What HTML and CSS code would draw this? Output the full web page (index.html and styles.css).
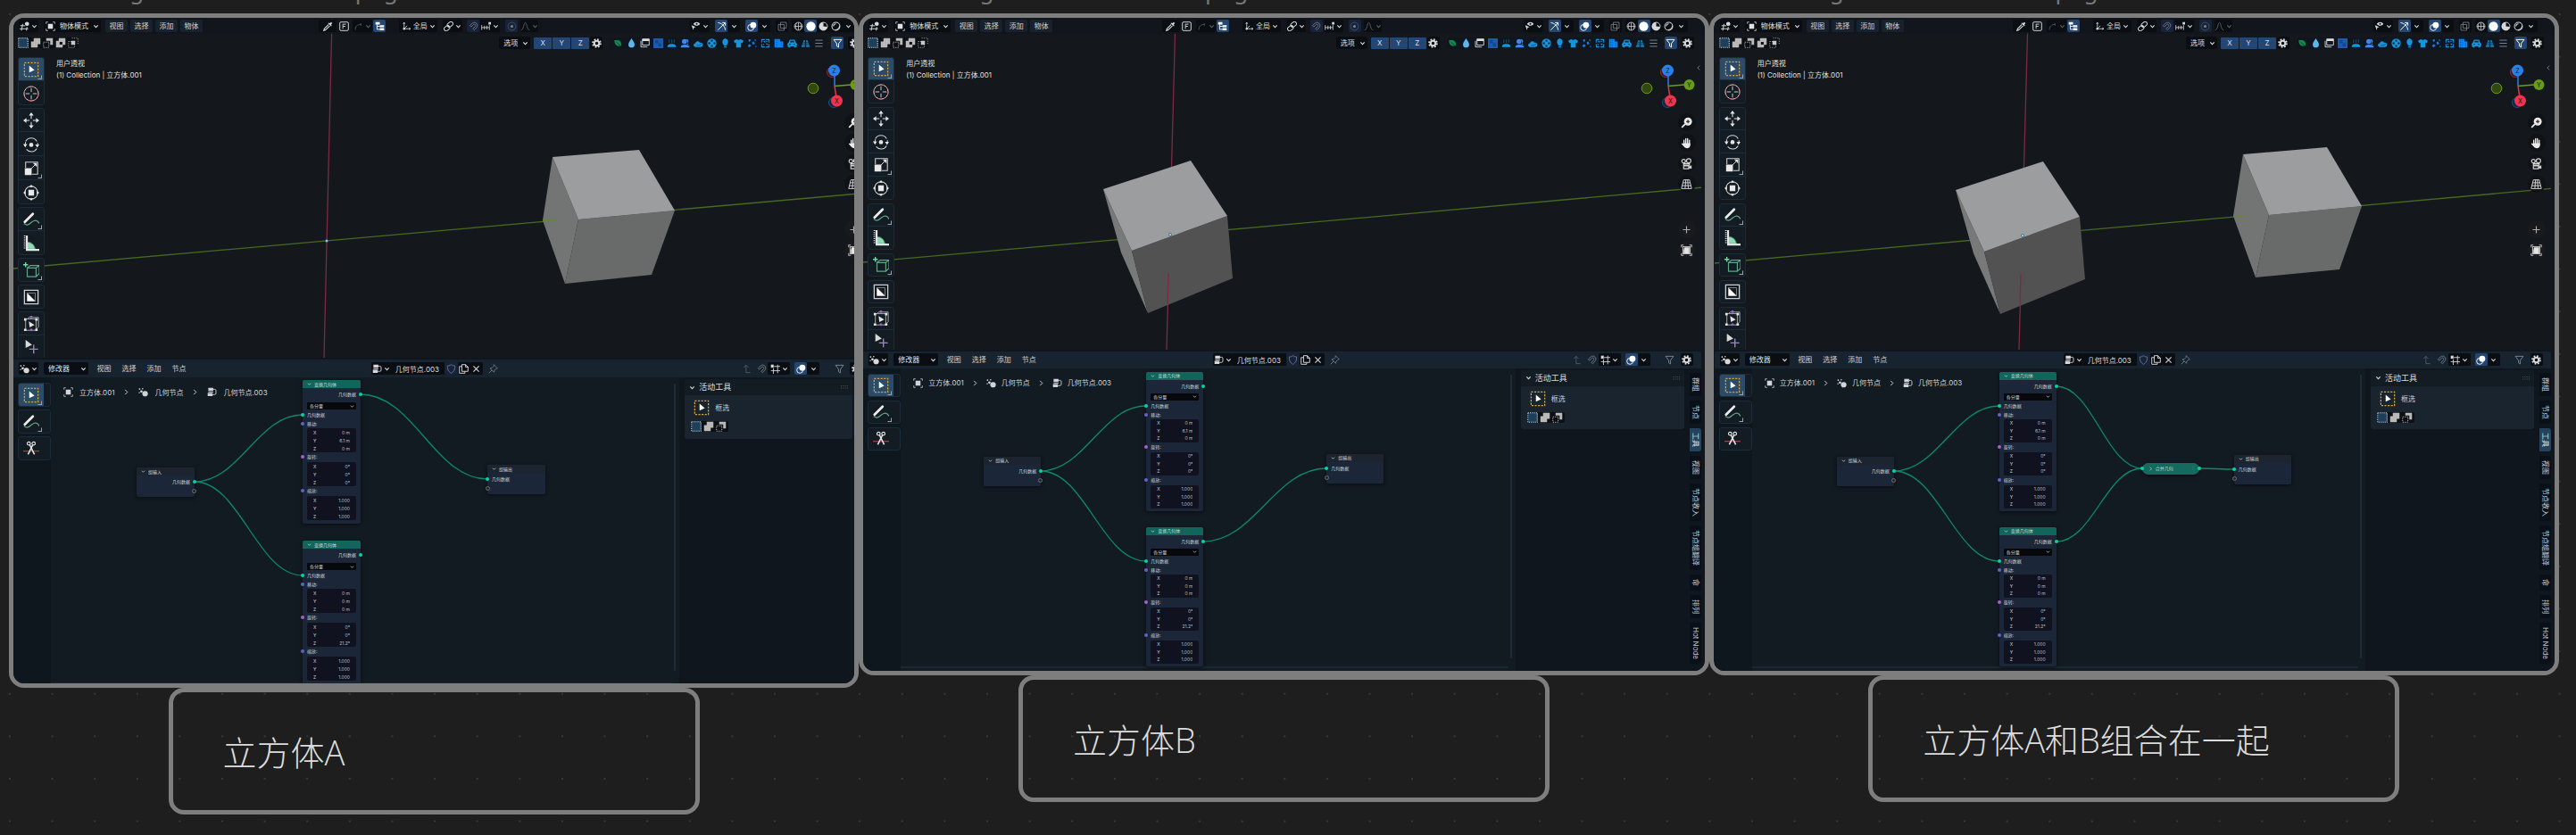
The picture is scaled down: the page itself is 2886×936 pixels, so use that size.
FILE: index.html
```html
<!DOCTYPE html>
<html lang="zh-CN">
<head>
<meta charset="utf-8">
<meta name="viewport" content="width=device-width, initial-scale=1">
<title>几何节点 立方体</title>
<link rel="stylesheet" href="styles.css">
</head>
<body>
<svg class="sprite" aria-hidden="true">
  <symbol id="chev" viewBox="0 0 8 8"><path d="M1.5 2.7 4 5.3 6.5 2.7" fill="none" stroke="currentColor" stroke-width="1.2"/></symbol>
  <symbol id="chevr" viewBox="0 0 8 8"><path d="M2.5 1 5.5 4 2.5 7" fill="none" stroke="currentColor" stroke-width="1.1"/></symbol>
  <symbol id="chevl" viewBox="0 0 8 8"><path d="M5.5 1 2.5 4 5.5 7" fill="none" stroke="currentColor" stroke-width="1.1"/></symbol>
  <symbol id="view3d" viewBox="0 0 16 16"><path d="M1 7h8M0 12h14M5 4 3 15M12 9l-1 6" fill="none" stroke="currentColor" stroke-width="1.4"/><circle cx="12" cy="4" r="3.4" fill="currentColor"/></symbol>
  <symbol id="object" viewBox="0 0 16 16"><path d="M4 4h8v8H4z" fill="currentColor"/><path d="M1 4V1h3M12 1h3v3M15 12v3h-3M4 15H1v-3" fill="none" stroke="currentColor" stroke-width="1.1"/></symbol>
  <symbol id="dropper" viewBox="0 0 16 16"><path d="m9 2 2 1 2-2 2 2-2 2 1 2-1 1-5-5z" fill="currentColor"/><path d="m9 5-7 7-1 3 3-1 7-7" fill="none" stroke="currentColor" stroke-width="1.6"/></symbol>
  <symbol id="fkey" viewBox="0 0 16 16"><rect x="1" y="1" width="14" height="14" rx="2" fill="none" stroke="currentColor" stroke-width="1.4"/><path d="M6 12V4.5h5M6 8h4" fill="none" stroke="currentColor" stroke-width="1.3"/></symbol>
  <symbol id="arc" viewBox="0 0 16 16"><path d="M3 14c0-6 3-9 9-9M12 3v4" fill="none" stroke="currentColor" stroke-width="1.2"/></symbol>
  <symbol id="tree" viewBox="0 0 16 16"><path d="M1 1h7v4H1zM8 6h7v3.500H8zM8 11h7v3.500H8z" fill="currentColor"/><path d="M3.500 5v8H8M3.500 8H8" fill="none" stroke="currentColor" stroke-width="1.3"/></symbol>
  <symbol id="axes" viewBox="0 0 16 16"><path d="M4 2v10h10M4 12l5-5M2.500 4 4 1.500 5.500 4M12 10.500l2.500 1.500-2.500 1.500" fill="none" stroke="currentColor" stroke-width="1.2"/><circle cx="4" cy="12" r="1.800" fill="currentColor"/></symbol>
  <symbol id="link" viewBox="0 0 16 16"><g fill="none" stroke="currentColor" stroke-width="1.4"><rect x="5.500" y="2" width="10" height="6.500" rx="3.200" transform="rotate(-40 10 5)"/><rect x="0.500" y="7.500" width="10" height="6.500" rx="3.200" transform="rotate(-40 6 11)"/></g><circle cx="8" cy="8" r="1.300" fill="currentColor"/></symbol>
  <symbol id="magnet" viewBox="0 0 16 16"><path d="m2 7 4-4c5-4 11 2 7 7l-4 4-2-2 4-4c1.500-2-1-4.500-3-3L4 9z" fill="none" stroke="currentColor" stroke-width="1.2"/></symbol>
  <symbol id="incr" viewBox="0 0 16 16"><path d="M1 6v8M1 10h12M5.500 7v6M9.500 7v6M13.500 6v8" fill="none" stroke="currentColor" stroke-width="1.2"/><path d="M12 1h4v4h-4z" fill="currentColor"/></symbol>
  <symbol id="prop" viewBox="0 0 16 16"><circle cx="8" cy="8" r="6.500" fill="none" stroke="currentColor" stroke-width="1" opacity=".6"/><circle cx="8" cy="8" r="2.200" fill="currentColor"/></symbol>
  <symbol id="bell" viewBox="0 0 16 16"><path d="M1 14c5 0 4-12 7-12s2 12 7 12" fill="none" stroke="currentColor" stroke-width="1.3"/></symbol>
  <symbol id="visib" viewBox="0 0 16 16"><path d="M4 4c3-4 8-4 11 0-3 4-8 4-11 0z" fill="currentColor"/><circle cx="9.500" cy="4" r="1.600" fill="#14181d"/><path d="m1 6 7 3-3 1-1 4z" fill="currentColor"/></symbol>
  <symbol id="gizmo" viewBox="0 0 16 16"><path d="M2 2c6 1 11 5 12 12M2 14 13 3M9 2h5v5" fill="none" stroke="currentColor" stroke-width="1.4"/></symbol>
  <symbol id="overlay" viewBox="0 0 16 16"><circle cx="10" cy="6" r="5" fill="currentColor"/><circle cx="6" cy="10" r="5" fill="none" stroke="currentColor" stroke-width="1.3"/></symbol>
  <symbol id="xray" viewBox="0 0 16 16"><path d="M5 1.500h9.500V11H5zM1.500 5H11v9.500H1.500z" fill="none" stroke="currentColor" stroke-width="1.2"/></symbol>
  <symbol id="wire" viewBox="0 0 16 16"><g fill="none" stroke="currentColor" stroke-width="1.1"><circle cx="8" cy="8" r="6.500"/><path d="M1.500 8h13M8 1.500v13M5 2.500c-2 4-2 7 0 11M11 2.500c2 4 2 7 0 11"/></g></symbol>
  <symbol id="solid" viewBox="0 0 16 16"><circle cx="8" cy="8" r="7.500" fill="#fff"/></symbol>
  <symbol id="matl" viewBox="0 0 16 16"><circle cx="8" cy="8" r="6.500" fill="none" stroke="currentColor" stroke-width="1.3"/><path d="M8 1.500A6.500 6.500 0 1 0 14 9l-6-1z" fill="currentColor"/><path d="M8 8h6.500A6.500 6.500 0 0 1 8 14.500" fill="currentColor" opacity=".3"/></symbol>
  <symbol id="rend" viewBox="0 0 16 16"><circle cx="8" cy="8" r="6.500" fill="none" stroke="currentColor" stroke-width="1.5"/><path d="M4 8a4 4 0 0 1 4-4M14 7a7 7 0 0 1-7 7" fill="none" stroke="currentColor" stroke-width="1.5"/></symbol>
  <symbol id="sel1" viewBox="0 0 16 16"><rect x="1" y="1" width="14" height="14" fill="#1c3f5c" stroke="#d4e4f0" stroke-width="1.400" stroke-dasharray="1.500 1.500"/></symbol>
  <symbol id="sel2" viewBox="0 0 16 16"><path d="M5 1h10v9h-4v5H1V6h4z" fill="#b9b9b9"/></symbol>
  <symbol id="sel3" viewBox="0 0 16 16"><path d="M5 1h10v10h-4V5H5z" fill="#b9b9b9"/><path d="M1 7h8v8H1z" fill="none" stroke="#b9b9b9" stroke-width="1.300" stroke-dasharray="1.600 1.600"/></symbol>
  <symbol id="sel4" viewBox="0 0 16 16"><path d="M5 1h10v10h-4v4H1V5h4zM6.500 6.500v4h4v-4z" fill="#b9b9b9" fill-rule="evenodd"/></symbol>
  <symbol id="sel5" viewBox="0 0 16 16"><path d="M1 6h9v9H1zM6 1h9v9" fill="none" stroke="#999" stroke-width="1.300" stroke-dasharray="1.600 1.600"/><path d="M5 5h6v6H5z" fill="#c9c9c9"/></symbol>
  <symbol id="gear" viewBox="0 0 16 16"><circle cx="8" cy="8" r="4" fill="none" stroke="currentColor" stroke-width="3"/><circle cx="8" cy="8" r="6.500" fill="none" stroke="currentColor" stroke-width="2.600" stroke-dasharray="2.600 2.500"/></symbol>
  <symbol id="funnel" viewBox="0 0 16 16"><path d="M1.500 2h13L9.500 8.500v6l-3-2v-4z" fill="none" stroke="currentColor" stroke-width="1.4"/></symbol>
  <symbol id="leaf" viewBox="0 0 16 16"><path d="M2 3c8-1 12 1 11 9-6 2-11 0-11-9z" fill="#118a4c"/><path d="m5 6 9 8" stroke="#0a2a1c" stroke-width="1"/></symbol>
  <symbol id="drop" viewBox="0 0 16 16"><path d="M8 0c3 5 5 7 5 10a5 5 0 0 1-10 0c0-3 2-5 5-10z" fill="#5cb8ec"/></symbol>
  <symbol id="stack" viewBox="0 0 16 16"><path d="M4 1h11v10H4z" fill="none" stroke="#ddd" stroke-width="1.300"/><path d="M4 1h11v3.500H4z" fill="#ddd"/><path d="M1.500 4v10H12" fill="none" stroke="#ddd" stroke-width="1.300"/></symbol>
  <symbol id="grid" viewBox="0 0 16 16"><path d="M0 0h16v16H0z" fill="#1d5bb0"/><path d="M3 3h10v10H3z" fill="#164684"/><path d="M8 3h5v5H8zM3 8h5v5H3z" fill="#1d5bb0"/></symbol>
  <symbol id="steam" viewBox="0 0 16 16"><path d="M1 14c0-4 3-5 7-5s7 1 7 5z" fill="#1595dc"/><path d="M4 7c-1-2 1-2 0-5M8 7c-1-2 1-2 0-5M12 7c-1-2 1-2 0-5" stroke="#1574ac" fill="none"/></symbol>
  <symbol id="person" viewBox="0 0 16 16"><circle cx="7" cy="5" r="4" fill="#3f88f0"/><path d="M1 15c0-4 2-5 6-5s8 1 8 5zM10 1c5 0 4 7 1 8l4 3v2z" fill="#3f88f0"/></symbol>
  <symbol id="cloud" viewBox="0 0 16 16"><path d="M3 14a3 3 0 0 1 0-6c1-4 6-4 7-1 3-1 6 1 5 3 0 2-1 4-4 4z" fill="#1595dc"/><path d="M5 11c4 1 6 0 9-3" stroke="#0e3a58" fill="none"/></symbol>
  <symbol id="ball" viewBox="0 0 16 16"><circle cx="8" cy="8" r="7.500" fill="#1595dc"/><g fill="#0f2a40"><circle cx="8" cy="3.800" r="1.700"/><circle cx="8" cy="12.200" r="1.700"/><circle cx="3.800" cy="8" r="1.700"/><circle cx="12.200" cy="8" r="1.700"/></g></symbol>
  <symbol id="bulb" viewBox="0 0 16 16"><path d="M8 0a6 6 0 0 1 3 10l-1 2H6l-1-2A6 6 0 0 1 8 0zM6 13h4v2H6z" fill="#1595dc"/></symbol>
  <symbol id="shirt" viewBox="0 0 16 16"><path d="M0 4l5-3c1 2 5 2 6 0l5 3-2 4-2-1v8H4V7L2 8z" fill="#1595dc"/></symbol>
  <symbol id="parts" viewBox="0 0 16 16"><path d="m2 2 3-1 1 3-3 2zM1 12l3-3 3 3-4 3zM8 6l3-1 2 4-4 1zM12 1l3 2-2 2zM13 12l3 1-2 2z" fill="#1478e0"/></symbol>
  <symbol id="swap" viewBox="0 0 16 16"><path d="M2 7V2h5M9 2h5v5M14 9v5H9M7 14H2V9M5 5h2v2M9 5h2M5 9v2M9 9h2v2" fill="none" stroke="#1c93d6" stroke-width="1.500"/></symbol>
  <symbol id="tower" viewBox="0 0 16 16"><path d="M1 15V1h9v4h5v10z" fill="#0f86f5"/><path d="M3 3.500h5M3 6.500h5M3 9.500h5M3 12.500h5M12 7v7" stroke="#0b3f7c" stroke-dasharray="1.500 1"/></symbol>
  <symbol id="car" viewBox="0 0 16 16"><path d="M0 9l2-2 2-5h8l2 5 2 2-1 5h-2v1h-2v-2H5v2H3v-1H1z" fill="#1595dc"/><path d="M4.500 6.500 5 4h6l.5 2.500zM3 9h3v1.500H3zM10 9h3v1.500h-3z" fill="#0f2a40"/></symbol>
  <symbol id="road" viewBox="0 0 16 16"><path d="M1 14 5 3h2v11zM15 14 11 3H9v11z" fill="#1382b8"/><path d="M2 10h12M3 7h10" stroke="#0f2a40"/></symbol>
  <symbol id="list" viewBox="0 0 16 16"><path d="M2 3h12M2 8h12M2 13h12" stroke="#8b8f93" stroke-width="1.300"/></symbol>
  <symbol id="tselect" viewBox="0 0 20 20"><rect x="1.500" y="1.500" width="17" height="17" fill="none" stroke="#d9a23a" stroke-width="1.400" stroke-dasharray="2.400 1.600"/><path d="m7.500 5 6.500 5.500-6.500 3z" fill="#fff"/></symbol>
  <symbol id="tcursor" viewBox="0 0 20 20"><circle cx="10" cy="10" r="9" fill="none" stroke="#ddd" stroke-width="1.100"/><circle cx="10" cy="10" r="9" fill="none" stroke="#c2464b" stroke-width="1.100" stroke-dasharray="4 3"/><path d="M10 3v5M10 12v5M3 10h5M12 10h5" stroke="#ddd" stroke-width="1"/></symbol>
  <symbol id="tmove" viewBox="0 0 20 20"><path d="m10 0 3 4H7zM10 20l3-4H7zM0 10l4-3v6zM20 10l-4-3v6z" fill="#e4e4e4"/><path d="M10 3v5M10 12v5M3 10h5M12 10h5" stroke="#e4e4e4" stroke-width="1.200"/></symbol>
  <symbol id="trot" viewBox="0 0 20 20"><path d="M3 6a8 8 0 0 1 14 0M17 15a8 8 0 0 1-13 1M2.500 12c0-3 0-4 .5-5M18 8v3" fill="none" stroke="#cfcfcf" stroke-width="1.200"/><circle cx="10" cy="10.500" r="2.600" fill="#e4e4e4"/><path d="M0 9.500h5l-2.500 4zM15 10h5l-2.500 4z" fill="#e4e4e4"/></symbol>
  <symbol id="tscale" viewBox="0 0 20 20"><path d="M3 9V2h15v15h-7" fill="none" stroke="#cfcfcf" stroke-width="1.200"/><path d="M2 9.500h8.500V18H2zM17 3v5l-5-5z" fill="#e9e9e9"/><path d="m10 10 5-5" stroke="#e9e9e9"/></symbol>
  <symbol id="txform" viewBox="0 0 20 20"><circle cx="10" cy="10" r="8" fill="none" stroke="#cfcfcf" stroke-width="1.200"/><path d="M6.500 6.500h7v7h-7zM10 0l2.500 3h-5zM10 20l2.500-3h-5zM0 10l3-2.500v5zM20 10l-3-2.500v5z" fill="#e9e9e9"/></symbol>
  <symbol id="tpen" viewBox="0 0 20 20"><path d="M1 15c5 4 7 0 10-2s6-3 9 2" fill="none" stroke="#5fa587" stroke-width="1.400"/><path d="M2 13 12 3" stroke="#ececec" stroke-width="3" stroke-linecap="round"/></symbol>
  <symbol id="truler" viewBox="0 0 20 20"><path d="M5 8a10 10 0 0 1 10 9H5z" fill="#8edcb4" stroke="#3f7d62"/><path d="M4.500 0v18H20" fill="none" stroke="#e4e4e4" stroke-width="2.400"/><path d="M1.800 0v17" stroke="#e4e4e4" stroke-width="2" stroke-dasharray="1.200 1.300"/></symbol>
  <symbol id="tcube" viewBox="0 0 20 20"><path d="M5 7h11v11H5zM5 7l4-3h11l-4 3M20 4v10l-4 4" fill="none" stroke="#5fa587" stroke-width="1.300"/><path d="M3 0v6M0 3h6" stroke="#7fd3a8" stroke-width="1.500"/></symbol>
  <symbol id="tframe" viewBox="0 0 20 20"><path d="M1.500 1.500h17v17h-17z" fill="none" stroke="#cfcfcf" stroke-width="1.400"/><path d="M5 5h10v10H5z" fill="none" stroke="#888"/><path d="M5 5l10 10H5z" fill="#fff"/></symbol>
  <symbol id="tcage" viewBox="0 0 20 20"><path d="M3 4h13v14H3zM5 4l2-2h12v12l-3 3" fill="none" stroke="#b5b5b5" stroke-width="1"/><path d="M1 3h3v3H1zM15 3h3v3h-3zM1 16h3v3H1zM15 16h3v3h-3zM7 7l7 4.500-6 3z" fill="#e4e4e4"/><circle cx="10" cy="1.500" r="1.700" fill="#9a62c4"/><circle cx="10" cy="17.500" r="1.700" fill="#9a62c4"/></symbol>
  <symbol id="ttweak" viewBox="0 0 20 20"><path d="m3 0 8 6-8 4z" fill="#d9d9d9"/><path d="M13 6v11M7.500 11.500h11" stroke="#9a86b4" stroke-width="1.600"/></symbol>
  <symbol id="tcut" viewBox="0 0 20 20"><path d="M0 13h20" stroke="#b3534b" stroke-width="1.200"/><path d="m8 5 6 12M12 5 6 17" stroke="#e4e4e4" stroke-width="1.800"/><circle cx="7" cy="3.500" r="2" fill="none" stroke="#e4e4e4" stroke-width="1.300"/><circle cx="13" cy="3.500" r="2" fill="none" stroke="#e4e4e4" stroke-width="1.300"/></symbol>
  <symbol id="zoom" viewBox="0 0 16 16"><circle cx="10" cy="6.500" r="5.500" fill="#e9e9e9"/><path d="M10 4v5M7.500 6.500h5" stroke="#111" stroke-width="1.300"/><path d="m6 10-4.500 4.500" stroke="#e9e9e9" stroke-width="2.200"/></symbol>
  <symbol id="hand" viewBox="0 0 16 16"><path d="M4.500 11V4M7 9V1.800M9.500 9V1.800M12 10V4" stroke="#e9e9e9" stroke-width="1.700" stroke-linecap="round"/><path d="M4 8h9c1 4-1 7-4 7-4 0-5-3-8-6l1-1 2 1z" fill="#e9e9e9"/></symbol>
  <symbol id="cam" viewBox="0 0 16 16"><g fill="none" stroke="#d4d4d4" stroke-width="1.400"><circle cx="4" cy="4.500" r="2.500"/><circle cx="11" cy="4" r="3"/><path d="M4 8h8v2H4zM4 11h7v4H4z"/></g><path d="m11 12 4-2v5l-4-1z" fill="#d4d4d4"/></symbol>
  <symbol id="persp" viewBox="0 0 16 16"><path d="M4 2h8l3 12H1zM3 6h10M2 10h12M7 2l-1 12M9.500 2l1 12" fill="none" stroke="#d4d4d4" stroke-width="1.200"/></symbol>
  <symbol id="plus" viewBox="0 0 16 16"><path d="M8 3v10M3 8h10" stroke="#a9a9a9" stroke-width="1.400"/></symbol>
  <symbol id="fit" viewBox="0 0 16 16"><path d="M5 4h7v9H4V8z" fill="#e4e4e4"/><path d="M1 4V1h3M12 1h3v3M15 12v3h-3M4 15H1v-3M3 3h10v10H3z" fill="none" stroke="#b9b9b9" stroke-width="1.300"/></symbol>
  <symbol id="geo" viewBox="0 0 16 16"><circle cx="11" cy="10.500" r="4.500" fill="currentColor"/><circle cx="5" cy="7" r="2" fill="currentColor"/><circle cx="2" cy="3" r="1.300" fill="currentColor"/><circle cx="7" cy="2.500" r="1.200" fill="currentColor"/><circle cx="1.500" cy="9" r="1" fill="currentColor"/></symbol>
  <symbol id="ntree" viewBox="0 0 16 16"><path d="M2 1h8v5H2zM1 9.500h8v5H1z" fill="currentColor"/><path d="M10 3.500h2.500a2 2 0 0 1 2 2V10a2 2 0 0 1-2 2H9M2 8h8" fill="none" stroke="currentColor" stroke-width="1.300"/></symbol>
  <symbol id="shield" viewBox="0 0 16 16"><path d="M8 1c2 1.500 4 2 6 2 0 6-1 9-6 12C3 12 2 9 2 3c2 0 4-.5 6-2z" fill="none" stroke="currentColor" stroke-width="1.200"/></symbol>
  <symbol id="copy" viewBox="0 0 16 16"><path d="M5 1h6l4 4v7H5zM11 1v4h4M5 4H1v11h9v-3" fill="none" stroke="currentColor" stroke-width="1.400"/></symbol>
  <symbol id="cross" viewBox="0 0 16 16"><path d="m3.500 3.500 9 9M12.500 3.500l-9 9" stroke="currentColor" stroke-width="1.600"/></symbol>
  <symbol id="pin" viewBox="0 0 16 16"><path d="m9 1 6 6-2 .5-3 3-.5 3L3 7l3-.5 3-3zM6 10l-5 5" fill="none" stroke="currentColor" stroke-width="1.200"/></symbol>
  <symbol id="up" viewBox="0 0 16 16"><path d="M3 6l4-4 4 4M7 2v12h7" fill="none" stroke="currentColor" stroke-width="1.200"/></symbol>
  <symbol id="snapg" viewBox="0 0 16 16"><path d="M1 1h4.500v5H1z" fill="currentColor"/><path d="M6 4h10M1 11h15M5 7v9M12 1v14" fill="none" stroke="currentColor" stroke-width="1.300"/></symbol>
  <symbol id="dots" viewBox="0 0 10 4"><path d="M1 .5h8M1 3h8" stroke="#4b5560" stroke-dasharray="1 1.300"/></symbol>
</svg>
<main class="board" id="board"></main>
<script src="app.js"></script>
</body>
</html>
```
FILE: styles.css
```css
* { box-sizing: border-box; }

html { min-height: 100%; background: #1e1e1e; }

body {
  margin: 0;
  min-height: 100vh;
  overflow-x: hidden;
  color: #dfe2e5;
  font-family: Inter, "Noto Sans CJK SC", sans-serif;
  font-size: 8px;
  line-height: 10px;
  background-color: #1e1e1e;
  background-image: radial-gradient(circle at 1px 1px, #383838 1px, transparent 1px);
  background-size: calc(100vw * 10 / 606) calc(100vw * 10 / 606);
  background-position: 10px 15px;
}

button, select, input { font: inherit; color: inherit; border: 0; margin: 0; padding: 0; background: none; }
button { cursor: pointer; }
.sprite { position: absolute; width: 0; height: 0; }
.ico { width: 11px; height: 11px; flex: none; display: block; }
.chev { width: 7px; height: 7px; flex: none; display: block; }

.board { display: grid; grid-template-columns: repeat(3, 1fr); padding: 0 19px 0 10px; align-items: start; }
.item { margin: 0; min-width: 0; }

.file {
  height: 15px;
  overflow: hidden;
  display: flex;
  align-items: flex-end;
  padding: 0 0 9px;
  color: #777;
  font: 26px/34px "Noto Sans", sans-serif;
  white-space: nowrap;
}
.file span { display: block; }

.card { aspect-ratio: 952 / 742; border: 5px solid #7e7e7e; border-radius: 17px; overflow: hidden; background: #0f161d; display: flex; }
.card-a { aspect-ratio: 952 / 756; }
.card-c { padding-left: 1px; }
.stage { flex: none; width: 100%; display: flex; flex-direction: column; --tool: 26px; --tgap: 4px; --view: 371; --nodes: 339; }
.card-a .stage { width: 102%; --tool: 27px; --tgap: 3px; --view: 381; --nodes: 343; }

.label {
  width: 62.5%;
  height: 142px;
  margin: 0 auto;
  border: 5px solid #7e7e7e;
  border-radius: 17px;
  padding: 2px 56px 0;
  display: flex;
  align-items: center;
  color: #dcdcdc;
  font: 300 38px/48px "Open Sans", "Noto Sans CJK SC", sans-serif;
  white-space: nowrap;
}

/* 3D viewport */
.view { position: relative; flex: var(--view) 1 0; min-height: 0; overflow: hidden; background: #14181d; display: flex; flex-direction: column; margin-right: 4px; }
.scene { position: absolute; left: 0; top: 0; width: 100%; height: 100%; }
.row { position: relative; display: flex; align-items: center; flex: none; }
.row1 { height: 18px; padding: 0 15px 0 6px; background: rgba(17, 23, 29, .8); }
.row2 { height: 20px; padding: 0 8px 0 5px; }
.grow3 { flex: 3; }
.grow4 { flex: 4; }
.g1 { margin-left: 1px; } .g3 { margin-left: 3px; } .g5 { margin-left: 5px; } .g6 { margin-left: 6px; } .g15 { margin-left: 15px; }

.btn { height: 14px; min-width: 14px; border-radius: 2px; display: flex; align-items: center; justify-content: center; gap: 2px; flex: none; color: #d6d8da; white-space: nowrap; }
.dark { background: #0a0d11; }
.on { background: #234673; color: #fff; }
.navy { background: #17233a; }
.dim { color: #5b6067; }
.half { color: #7c8288; }
.w20 { width: 20px; } .w22 { width: 22px; } .w25 { width: 25px; } .w43 { width: 43px; }
.menu { width: 25px; background: #18222d; color: #cdd1d5; margin-right: 3px; }
.menus { display: flex; margin-left: 5px; }

.pick { position: relative; height: 14px; border-radius: 2px; background: #0a0d11; display: flex; align-items: center; flex: none; }
.pick .ico { margin-left: 2px; }
.pick .chev { position: absolute; right: 2px; pointer-events: none; }
.pick select { flex: 1; min-width: 0; height: 100%; appearance: none; outline: 0; line-height: 10px; }
.mode { width: 64px; }
.mode select { padding-left: 5px; }
.opts { width: 35px; }
.opts select { padding-left: 5px; }
.shade { display: flex; background: #0a0d11; border-radius: 2px; margin-left: 4px; }

.modes { display: flex; gap: 2px; background: #0c0f13; border-radius: 2px; }
.modes button { width: 12px; height: 12px; }
.modes .ico { width: 12px; height: 12px; }
.xyz { display: flex; gap: 1px; margin-left: 4px; }
.xyz .btn { width: 20px; border-radius: 1px; background: #234673; color: #d9dee4; height: 13px; }
.assets { display: flex; margin-left: 8px; gap: 1px; background: #10161f; border-radius: 2px; }
.assets .btn { width: 14px; height: 13px; }
.card-a .assets { padding: 0 2px; }

.under { position: relative; flex: 1; min-height: 0; display: flex; padding: 6px 6px 0 5px; align-items: flex-start; }
.tools { display: flex; flex-direction: column; gap: var(--tgap); }
.tgroup { border: 1px solid #1c2b3a; border-radius: 3px; background: #131b23; overflow: hidden; }
.tool { position: relative; display: flex; align-items: center; justify-content: center; width: 28px; height: var(--tool); }
.tgroup .tool:first-child { margin-top: -1px; }
.tgroup .tool:last-child { margin-bottom: -1px; }
.tool + .tool { box-shadow: 0 -1px 0 #1c2b3a; }
.tool svg { width: 18px; height: 18px; }
.tool.sel { background: #2b4b69; }
.tool.more::after { content: ""; position: absolute; right: 2px; bottom: 2px; border: 1px solid #9aa3ab; border-left-color: transparent; border-top-color: transparent; width: 3px; height: 3px; }
.info { margin: 1px 0 0 13px; line-height: 13px; color: #e8e8e8; text-shadow: 0 0 1px #000; }
.info p { margin: 0; }
.side { margin-left: auto; width: 62px; display: flex; flex-direction: column; align-items: flex-end; }
.orient { width: 62px; height: 60px; display: block; }
.nav { width: 20px; height: 20px; border-radius: 50%; background: #0f1216; display: flex; align-items: center; justify-content: center; margin-top: 3px; }
.nav .ico { width: 13px; height: 13px; }
.nav.apart { margin-top: 31px; }
.nav.soft { background: #181a1d; }
.tuck { position: absolute; right: 0; top: 14px; width: 6px; height: 8px; color: #8f8f8f; }
.tuck svg { width: 6px; height: 8px; display: block; }

/* node editor */
.bar { display: flex; align-items: center; flex: none; height: 19px; margin-top: 2px; padding: 0 9px 0 6px; background: #172430; margin-right: 4px; border-radius: 0 3px 0 0; }
.card-a .bar { height: 20px; padding-right: 6px; }
.bar .menu { background: none; }
.modsel { width: 50px; margin-left: 6px; }
.modsel select { padding-left: 5px; }
.name { width: 60px; height: 14px; padding: 0 5px; background: #0a0d11; color: #dcdfe2; font-size: 8px; }
.editor { position: relative; flex: var(--nodes) 1 0; min-height: 0; display: flex; }
.rail { width: 42px; flex: none; background: #0f171e; padding: 6px 0 0 5px; }
.canvas { position: relative; flex: 1; min-width: 0; overflow: hidden; background: #131b22; }
.wires { position: absolute; left: 0; top: 0; width: 100%; height: 100%; fill: none; stroke: #0d8a6c; stroke-width: 1.300; }
.crumbs { position: absolute; left: 14px; top: 11px; display: flex; align-items: center; gap: 6px; color: #d0d4d8; }
.crumbs .chev { margin: 0 3px; }
.card-a .crumbs { gap: 7px; }
.vbar { position: absolute; right: 4px; top: 7px; bottom: 14px; width: 2px; background: #1f2b38; border-radius: 1px; }
.hbar { position: absolute; left: 0; right: 8px; bottom: 3px; height: 2px; background: #1b2734; }
.card-a .hbar { bottom: 0; height: 1px; }

.node { position: absolute; width: 64px; background: #1b2739; border-radius: 2px; box-shadow: 0 1px 4px #080c11; font-size: 5px; line-height: 8px; color: #ced3da; --box: 26px; --foot: 3px; --gap: 3px; }
.card-a .node { width: 65px; --box: 27px; --foot: 4px; --gap: 4px; }
.node .hd { height: 9px; display: flex; align-items: center; gap: 3px; padding-left: 5px; background: #1c242f; border-radius: 2px 2px 0 0; margin-bottom: 2px; }
.node .hd .chev { width: 5px; height: 5px; }
.node.xf .hd { background: #12655b; color: #c9dcda; }
.ln { position: relative; height: 10px; line-height: 10px; padding: 0 5px; }
.ln.out { text-align: right; }
.ln.tall { height: 11px; line-height: 11px; }
.sock { position: absolute; left: -2px; top: 3px; width: 4px; height: 4px; border-radius: 50%; background: #00d6a3; }
.out .sock { left: auto; right: -2px; }
.sock.vec { background: #6363c7; }
.sock.rot { background: #a85fc9; }
.sock.nil { background: #20252b; border: 1px solid #6c6c6c; width: 5px; height: 5px; }
.node .pick { height: 8px; margin: var(--gap) 5px 1px; background: #06080b; border-radius: 1px; }
.node .pick select { padding-left: 3px; line-height: 8px; }
.node .pick .chev { width: 5px; height: 5px; }
.box { height: var(--box); margin: 0 5px; background: #10131f; border-radius: 2px; display: flex; flex-direction: column; }
.box label { flex: 1; display: flex; align-items: center; justify-content: space-between; padding: 0 7px; min-height: 0; }
.box input { width: 30px; height: 8px; text-align: right; color: #b9bec5; }
.xf { padding-bottom: var(--foot); }
.io { height: 33px; }
.join { height: 13px; border-radius: 7px; background: #146a5e; display: flex; align-items: center; gap: 3px; padding: 0 5px 0 7px; color: #bcd9d3; }
.join .chev { width: 5px; height: 5px; }
.join i { margin-left: auto; color: #4f938a; font-style: normal; }
.join .sock { top: 4px; }
.join .sock.r { left: auto; right: -2px; }

.panelcol { width: 212px; flex: none; background: #0f161d; padding: 2px 4px 0 6px; display: flex; align-items: flex-start; justify-content: space-between; }
.card-a .panelcol { width: 215px; }
.panel { width: 183px; background: #1a242e; border-radius: 3px; overflow: hidden; }
.card-a .panel { width: 188px; }
.panel h2 { margin: 0; height: 18px; display: flex; align-items: center; gap: 4px; padding: 0 4px 0 5px; background: #141c23; font-size: 9px; font-weight: 400; color: #d9dcdf; }
.panel h2 .dots { margin-left: auto; width: 10px; height: 4px; }
.active { display: flex; align-items: center; gap: 6px; padding: 5px 0 6px 10px; color: #c9cdd1; }
.active svg { width: 18px; height: 18px; }
.panel .modes { width: 42px; margin: 0 0 7px 7px; }
.card-a .panel .modes { margin-bottom: 8px; }
.tabs { display: flex; flex-direction: column; gap: 5px; padding-top: 3px; }
.card-a .tabs { display: none; }
.tab { writing-mode: vertical-rl; width: 13px; padding: 5px 0; border-radius: 0 3px 3px 0; background: #0a101a; color: #c3c8ce; line-height: 13px; white-space: nowrap; text-orientation: sideways; }
.tab.cur { background: #24435e; color: #e0e4e8; }
```
FILE: app.js
```js
const use = (id, cls = 'ico') => `<svg class="${cls}" aria-hidden="true"><use href="#${id}"/></svg>`;
const chev = use('chev', 'chev');
const btn = (title, cls, inner) => `<button type="button" class="btn ${cls}" title="${title}">${inner}</button>`;
const pick = (label, cls, value, icon = '') =>
  `<span class="pick ${cls}">${icon ? use(icon) : ''}<select aria-label="${label}"><option>${value}</option></select>${chev}</span>`;
const menus = names => `<nav class="menus">${names.map(n => btn(n, 'menu', n)).join('')}</nav>`;
const modes = n => `<div class="modes">${[1, 2, 3, 4, 5].slice(0, n).map(i =>
  `<button type="button" title="选择模式 ${i}">${use('sel' + i)}</button>`).join('')}</div>`;

const toolGroup = list => `<div class="tgroup">${list.map(([id, cls = '']) =>
  `<button type="button" class="tool ${cls}" title="${id.slice(1)}">${use(id, 'ti')}</button>`).join('')}</div>`;

const viewHeader = () => `
<div class="row row1">
  ${btn('编辑器类型', 'dark w22', use('view3d') + chev)}
  <span class="g6"></span>${pick('模式', 'mode', '物体模式', 'object')}
  ${menus(['视图', '选择', '添加', '物体'])}
  <span class="grow3"></span>
  ${btn('吸管', 'dark w20', use('dropper'))}
  ${btn('F', 'g1', use('fkey'))}
  ${btn('弧', 'dark dim w22 g3', use('arc') + chev)}
  ${btn('层级', 'on g1', use('tree'))}
  ${btn('变换坐标系', 'dark w43 g15', use('axes') + '全局' + chev)}
  ${btn('轴心点', 'dark w22 g6', use('link') + chev)}
  ${btn('吸附', 'navy half g5', use('magnet'))}
  ${btn('吸附到', 'dark w22 g1', use('incr') + chev)}
  ${btn('衰减编辑', 'navy half g6', use('prop'))}
  ${btn('衰减', 'dark dim w20 g3', use('bell') + chev)}
  <span class="grow4"></span>
  ${btn('可见性', 'dark w22', use('visib') + chev)}
  ${btn('Gizmo', 'on g6', use('gizmo'))}${btn('Gizmo 选项', 'dark', chev)}
  ${btn('叠加层', 'on g6', use('overlay'))}${btn('叠加层选项', 'dark', chev)}
  ${btn('透视', 'dark half g6', use('xray'))}
  <span class="shade">${btn('线框', '', use('wire'))}${btn('实体', 'on', use('solid'))}${btn('材质', '', use('matl'))}${btn('渲染', '', use('rend'))}${btn('着色', '', chev)}</span>
</div>
<div class="row row2">
  ${modes(5)}
  <span class="grow3"></span>
  ${pick('选项', 'opts', '选项')}
  <div class="xyz">${['X', 'Y', 'Z'].map(a => btn(a, '', a)).join('')}</div>
  ${btn('设置', 'dark g1', use('gear'))}
  <div class="assets">${['leaf', 'drop', 'stack', 'grid', 'steam', 'person', 'cloud', 'ball', 'bulb', 'shirt', 'parts', 'swap', 'tower', 'car', 'road', 'list'].map(i => btn(i, '', use(i))).join('')}</div>
  ${btn('过滤', 'on g5', use('funnel'))}${btn('设置', 'dark g5', use('gear'))}
</div>`;

const orient = `<svg class="orient" viewBox="0 0 62 60" aria-label="视图方向">
  <circle cx="28" cy="17" r="5.500" fill="#3a1820" stroke="#8a2a3a"/>
  <circle cx="30" cy="51" r="5.500" fill="#14263f" stroke="#1e4c86"/>
  <path d="M31 32.500V15" stroke="#2b80e6" stroke-width="1.500"/><path d="m31 32.500 24-2" stroke="#6aa015" stroke-width="1.500"/><path d="m31 32.500 2.500 16" stroke="#e8334b" stroke-width="1.500"/>
  <circle cx="7" cy="35" r="5.800" fill="#33480f" stroke="#6a9a16"/>
  <circle cx="30.500" cy="15" r="6.500" fill="#2b80e6"/><circle cx="54.500" cy="31" r="6" fill="#689c12"/><circle cx="33.500" cy="49" r="6.500" fill="#f2334d"/>
  <g font-family="Inter, sans-serif" font-size="7" text-anchor="middle" fill="#101418"><text x="30.500" y="17.500">Z</text><text x="54.500" y="33.500">Y</text><text x="33.500" y="51.500">X</text></g>
</svg>`;

const viewport = d => `
<section class="view" aria-label="三维视图">
  <svg class="scene" aria-hidden="true">${d.scene}</svg>
  ${viewHeader()}
  <div class="under">
    <div class="tools">
      ${toolGroup([['tselect', 'sel more'], ['tcursor']])}
      ${toolGroup([['tmove'], ['trot'], ['tscale', 'more'], ['txform']])}
      ${toolGroup([['tpen', 'more'], ['truler']])}
      ${toolGroup([['tcube', 'more']])}
      ${toolGroup([['tframe']])}
      ${toolGroup([['tcage'], ['ttweak']])}
    </div>
    <div class="info"><p>用户透视</p><p>(1) Collection | 立方体.001</p></div>
    <div class="side">${orient}
      <button type="button" class="nav" title="缩放">${use('zoom')}</button>
      <button type="button" class="nav" title="平移">${use('hand')}</button>
      <button type="button" class="nav" title="相机">${use('cam')}</button>
      <button type="button" class="nav" title="透视/正交">${use('persp')}</button>
      <button type="button" class="nav apart soft" title="添加">${use('plus')}</button>
      <button type="button" class="nav soft" title="适配">${use('fit')}</button>
    </div>
    <button type="button" class="tuck" title="侧栏">${use('chevl', '')}</button>
  </div>
</section>`;

const sock = (kind = '') => `<i class="sock ${kind}"></i>`;
const vector = (name, values) => `<div class="box">${['X', 'Y', 'Z'].map((a, i) =>
  `<label>${a}<input type="text" value="${values[i]}" aria-label="${name} ${a}"></label>`).join('')}</div>`;
const at = ([x, y]) => `style="left:${x}px;top:${y}px"`;

const transformNode = (pos, move, rot) => `
<article class="node xf" ${at(pos)}>
  <div class="hd">${chev}变换几何体</div>
  <div class="ln out">几何数据${sock()}</div>
  ${pick('模式', '', '各分量')}
  <div class="ln">几何数据${sock()}</div>
  <div class="ln">移动:${sock('vec')}</div>${vector('移动', move)}
  <div class="ln tall">旋转:${sock('rot')}</div>${vector('旋转', rot)}
  <div class="ln tall">缩放:${sock('vec')}</div>${vector('缩放', ['1.000', '1.000', '1.000'])}
</article>`;
const ioNode = (pos, title, side) => `
<article class="node io" ${at(pos)}>
  <div class="hd">${chev}${title}</div>
  <div class="ln ${side}">几何数据${sock()}</div>
  <div class="ln ${side}">${sock('nil')}</div>
</article>`;
const joinNode = pos => `<article class="node join" ${at(pos)}>${sock()}${use('chevr', 'chev')}合并几何<i>⁞⁞</i>${sock('r')}</article>`;

const wire = ([x1, y1], [x2, y2]) => {
  const h = (x2 - x1) / 2.4;
  return `<path d="M${x1} ${y1}C${x1 + h} ${y1} ${x2 - h} ${y2} ${x2} ${y2}"/>`;
};

function nodeEditor(d) {
  const w = d.w, off = ([x, y], dx, dy) => [x + dx, y + dy];
  const outOf = p => off(p, w, 16);
  const intoXf = p => off(p, 0, d.inY);
  const links = [[outOf(d.input), intoXf(d.a)], [outOf(d.input), intoXf(d.b)]];
  const end = off(d.output, 0, 16);
  if (d.join) {
    const j = off(d.join, 0, 6);
    links.push([outOf(d.a), j], [outOf(d.b), j], [off(j, w, 0), end]);
  } else {
    links.push([outOf(d.live === 'a' ? d.a : d.b), end]);
  }
  return `
<header class="bar">
  ${btn('编辑器类型', 'dark w22', use('geo') + chev)}
  ${pick('类型', 'modsel', '修改器')}
  ${menus(['视图', '选择', '添加', '节点'])}
  <span class="grow3"></span>
  ${btn('浏览', 'dark w22', use('ntree') + chev)}
  <input class="name" type="text" value="几何节点.003" aria-label="节点组名称">
  ${btn('伪用户', 'navy half g1', use('shield'))}${btn('复制', 'dark', use('copy'))}${btn('移除', 'dark', use('cross'))}
  ${btn('固定', 'half g5', use('pin'))}
  <span class="grow4"></span>
  ${btn('上级', 'dim w20', use('up'))}${btn('吸附', 'half', use('magnet'))}
  ${btn('吸附到', 'dark w25', use('snapg') + chev)}
  ${btn('叠加层', 'on g5', use('overlay'))}${btn('叠加层选项', 'dark', chev)}
  ${btn('过滤', 'half g15', use('funnel'))}${btn('设置', 'dark g5', use('gear'))}
</header>
<section class="editor" aria-label="几何节点编辑器">
  <div class="rail"><div class="tools">
    ${toolGroup([['tselect', 'sel more']])}${toolGroup([['tpen', 'more']])}${toolGroup([['tcut']])}
  </div></div>
  <div class="canvas">
    <div class="hbar"></div><div class="vbar"></div>
    <svg class="wires" aria-hidden="true">${links.map(l => wire(...l)).join('')}</svg>
    ${ioNode(d.input, '组输入', 'out')}
    ${transformNode(d.a, ['0 m', '6.1 m', '0 m'], ['0°', '0°', '0°'])}
    ${transformNode(d.b, ['0 m', '0 m', '0 m'], ['0°', '0°', '21.2°'])}
    ${d.join ? joinNode(d.join) : ''}
    ${ioNode(d.output, '组输出', '')}
    <div class="crumbs">${use('object')}<span>立方体.001</span>${use('chevr', 'chev')}${use('geo')}<span>几何节点</span>${use('chevr', 'chev')}${use('ntree')}<span>几何节点.003</span></div>
  </div>
  <aside class="panelcol">
    <div class="panel">
      <h2>${chev}活动工具${use('dots', 'dots')}</h2>
      <div class="active">${use('tselect', '')}框选</div>
      ${modes(3)}
    </div>
    <div class="tabs">${['群组', '节点', '工具', '视图', '节点收入', '节点组翻译', '命', '排列', 'Hot Node'].map(t =>
      `<button type="button" class="tab${t === '工具' ? ' cur' : ''}">${t}</button>`).join('')}</div>
  </aside>
</section>`;
}

const RED = 'stroke="#7d2a41" stroke-width="1.300"';
const GREEN = 'stroke="#47691f" stroke-width="1.300"';
const cube = (top, left, front, shade) =>
  `<path d="M${left}z" fill="${shade[0]}"/><path d="M${front}z" fill="${shade[1]}"/><path d="M${top}z" fill="#9b9d9e"/>`;
const origin = (x, y) => `<circle cx="${x}" cy="${y}" r="1.600" fill="#8fd3f5" stroke="#2a5570" stroke-width=".6"/>`;

const scenes = {
  a: `<path d="M357 0 348 382" ${RED}/><path d="M0 281 970 195" ${GREEN}/>` +
     cube('604 156 701 148 741 216 633 226', '604 156 633 226 618 298 593 227', '633 226 741 216 715 288 618 298', ['#727573', '#696b6a']) +
     `<path d="M593 227 610 226" stroke="#5d8a35"/>` + origin(351, 250),
  b: `<path d="M350 0 340 372" ${RED}/><path d="M0 274 942 190" ${GREEN}/>` +
     cube('367 160 408 222 301 261 269 192', '269 192 301 261 319 331 289 263', '301 261 408 222 414 292 319 331', ['#787a79', '#525252']) +
     `<path d="M342 286 341 321" ${RED}/>` + origin(344, 243),
  c: `<path d="M351 0 341 372" ${RED}/><path d="M0 275 942 191" ${GREEN}/>` +
     cube('368 161 409 223 302 262 270 193', '270 193 302 262 320 332 290 264', '302 262 409 223 415 293 320 332', ['#787a79', '#525252']) +
     `<path d="M343 287 342 322" ${RED}/>` + origin(345, 244) +
     cube('592 153 686 145 725 211 621 221', '592 153 621 221 606 291 581 222', '621 221 725 211 700 282 606 291', ['#727573', '#696b6a']) +
     `<path d="M581 223 598 222" stroke="#5d8a35"/>`
};

const cards = [
  { key: 'a', file: 'Pasted image 20240903141756.png', label: '立方体A', scene: scenes.a, w: 65, inY: 39, live: 'a',
    input: [96, 101], a: [282, 3], b: [282, 183], output: [489, 98] },
  { key: 'b', file: 'Pasted image 20240903141820.png', label: '立方体B', scene: scenes.b, w: 64, inY: 38, live: 'b',
    input: [93, 99], a: [275, 4], b: [275, 178], output: [477, 96] },
  { key: 'c', file: 'Pasted image 20240903141902.png', label: '立方体A和B组合在一起', scene: scenes.c, w: 64, inY: 38,
    input: [95, 99], a: [277, 4], b: [277, 178], join: [437, 106], output: [540, 97] }
];

document.getElementById('board').innerHTML = cards.map(d => `
<figure class="item">
  <div class="file"><span>${d.file}</span></div>
  <div class="card card-${d.key}"><div class="stage">${viewport(d)}${nodeEditor(d)}</div></div>
  <figcaption class="label">${d.label}</figcaption>
</figure>`).join('');
```
